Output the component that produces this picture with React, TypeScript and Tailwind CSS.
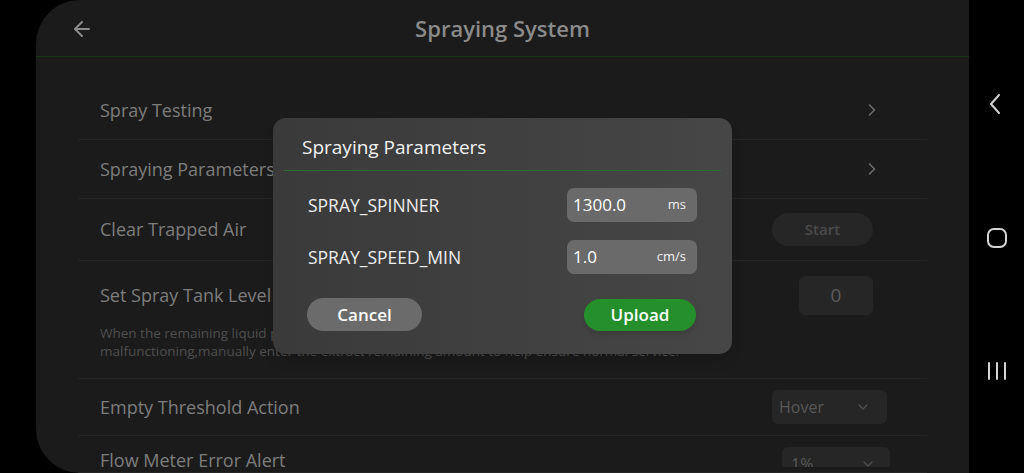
import { ChevronRight, ChevronDown, ArrowLeft } from "lucide-react";

const font = { fontFamily: "'Open Sans', 'Noto Sans', sans-serif" };

function Row({
  label,
  right,
  className = "",
  labelClass = "",
}: {
  label: string;
  right?: React.ReactNode;
  className?: string;
  labelClass?: string;
}) {
  return (
    <div
      className={`flex items-center justify-between border-b border-[#252525] pl-[22px] ${className}`}
    >
      <span className={`text-[18px] text-[#7d7d7d] ${labelClass}`}>{label}</span>
      {right}
    </div>
  );
}

function ParamRow({ label, value, unit }: { label: string; value: string; unit: string }) {
  return (
    <div className="flex items-center justify-between">
      <span className="text-[17.5px] text-[#ededed]">{label}</span>
      <div className="flex h-[34px] w-[130px] items-center justify-between rounded-[7px] bg-[#6a6a6a] pl-[6px] pr-[11px]">
        <span className="text-[17px] text-white">{value}</span>
        <span className="text-[13px] text-[#f2f2f2]">{unit}</span>
      </div>
    </div>
  );
}

export default function App() {
  return (
    <div className="relative flex h-[473px] w-[1024px] overflow-hidden bg-black" style={font}>
      <div className="w-[36px]" />

      {/* main panel */}
      <div className="flex flex-1 flex-col overflow-hidden rounded-l-[44px] bg-[#1b1b1b]">
        <div className="relative flex h-[57px] items-center justify-center border-b border-[#1c361c]">
          <ArrowLeft className="absolute left-[34px] top-[17px] h-[24px] w-[24px] text-[#8a8a8a]" strokeWidth={2} />
          <h1 className="text-[22px] font-semibold text-[#8a8a8a]">Spraying System</h1>
        </div>

        <div className="mx-[42px] h-[416px] overflow-hidden pt-[24px]">
          <Row
            label="Spray Testing"
            className="h-[59px]"
            right={<ChevronRight className="mr-[45px] h-[20px] w-[20px] text-[#6a6a6a]" />}
          />
          <Row
            label="Spraying Parameters"
            className="h-[59px]"
            right={<ChevronRight className="mr-[45px] h-[20px] w-[20px] text-[#6a6a6a]" />}
          />
          <Row
            label="Clear Trapped Air"
            className="h-[62px]"
            right={
              <button className="mr-[54px] h-[33px] w-[101px] rounded-full bg-[#262626] text-[15px] font-semibold text-[#4b4b4b]">
                Start
              </button>
            }
          />
          <div className="border-b border-[#252525] pl-[22px] pt-[14px] pb-[18px]">
            <div className="flex h-[40px] items-center justify-between">
              <span className="text-[18px] text-[#7d7d7d]">Set Spray Tank Level</span>
              <div className="mr-[54px] flex h-[39px] w-[74px] items-center justify-center rounded-[6px] bg-[#262626] text-[19px] text-[#5c5c5c]">
                0
              </div>
            </div>
            <p className="mt-[9px] pr-[60px] text-[13.5px] leading-[18px] text-[#4f4f4f]">
              When the remaining liquid percentage is inaccurate because the flow meter is
              <br />
              malfunctioning,manually enter the extract remaining amount to help ensure normal service.
            </p>
          </div>
          <Row
            label="Empty Threshold Action"
            className="h-[57px]"
            right={
              <div className="mr-[40px] flex h-[34px] w-[115px] items-center justify-between rounded-[6px] bg-[#262626] pl-[7px] pr-[16px]">
                <span className="text-[16px] text-[#585858]">Hover</span>
                <ChevronDown className="h-[16px] w-[16px] text-[#505050]" />
              </div>
            }
          />
          <Row
            label="Flow Meter Error Alert"
            className="h-[37px] items-start pt-[15px]"
            labelClass="leading-[18px]"
            right={
              <div className="mr-[37px] mt-[-4px] h-[20px] overflow-hidden">
                <div className="flex h-[34px] w-[108px] items-center justify-between rounded-[6px] bg-[#262626] pl-[9px] pr-[14px]">
                  <span className="text-[16px] text-[#585858]">1%</span>
                  <ChevronDown className="h-[16px] w-[16px] text-[#505050]" />
                </div>
              </div>
            }
          />
        </div>
      </div>

      {/* android nav bar */}
      <div className="flex w-[55px] flex-col items-center bg-black pt-[93px]">
        <svg className="mr-[3px]" width="14" height="22" viewBox="0 0 14 22" fill="none" stroke="#d4d4d4" strokeWidth="2" strokeLinecap="round" strokeLinejoin="round">
          <path d="M11 2 L3 11 L11 20" />
        </svg>
        <div className="mt-[113px] h-[20px] w-[20px] rounded-[7px] border-2 border-[#d4d4d4]" />
        <svg className="mt-[113px]" width="20" height="20" viewBox="0 0 20 20" stroke="#d4d4d4" strokeWidth="2" strokeLinecap="round">
          <path d="M2 2 V18 M10 2 V18 M18 2 V18" />
        </svg>
      </div>

      {/* dialog */}
      <div className="absolute left-[273px] top-[118px] flex h-[236px] w-[459px] flex-col rounded-[13px] bg-gradient-to-r from-[#3a3a3a] to-[#464646] shadow-lg">
        <div className="h-[52px] pl-[29px] pt-[16px]">
          <h2 className="text-[19px] font-medium leading-[26px] text-[#f2f2f2]">Spraying Parameters</h2>
        </div>
        <div className="mx-[11px] h-px bg-[#2f6a30]" />
        <div className="flex flex-col gap-[18px] px-[35px] pt-[17px]">
          <ParamRow label="SPRAY_SPINNER" value="1300.0" unit="ms" />
          <ParamRow label="SPRAY_SPEED_MIN" value="1.0" unit="cm/s" />
        </div>
        <div className="mt-[24px] flex items-center justify-between pl-[34px] pr-[36px]">
          <button className="h-[33px] w-[115px] rounded-full bg-[#6b6b6b] text-[17px] font-semibold text-white">
            Cancel
          </button>
          <button className="h-[32px] w-[112px] rounded-full bg-[#25902b] text-[17px] font-semibold text-white shadow-md">
            Upload
          </button>
        </div>
      </div>
    </div>
  );
}
